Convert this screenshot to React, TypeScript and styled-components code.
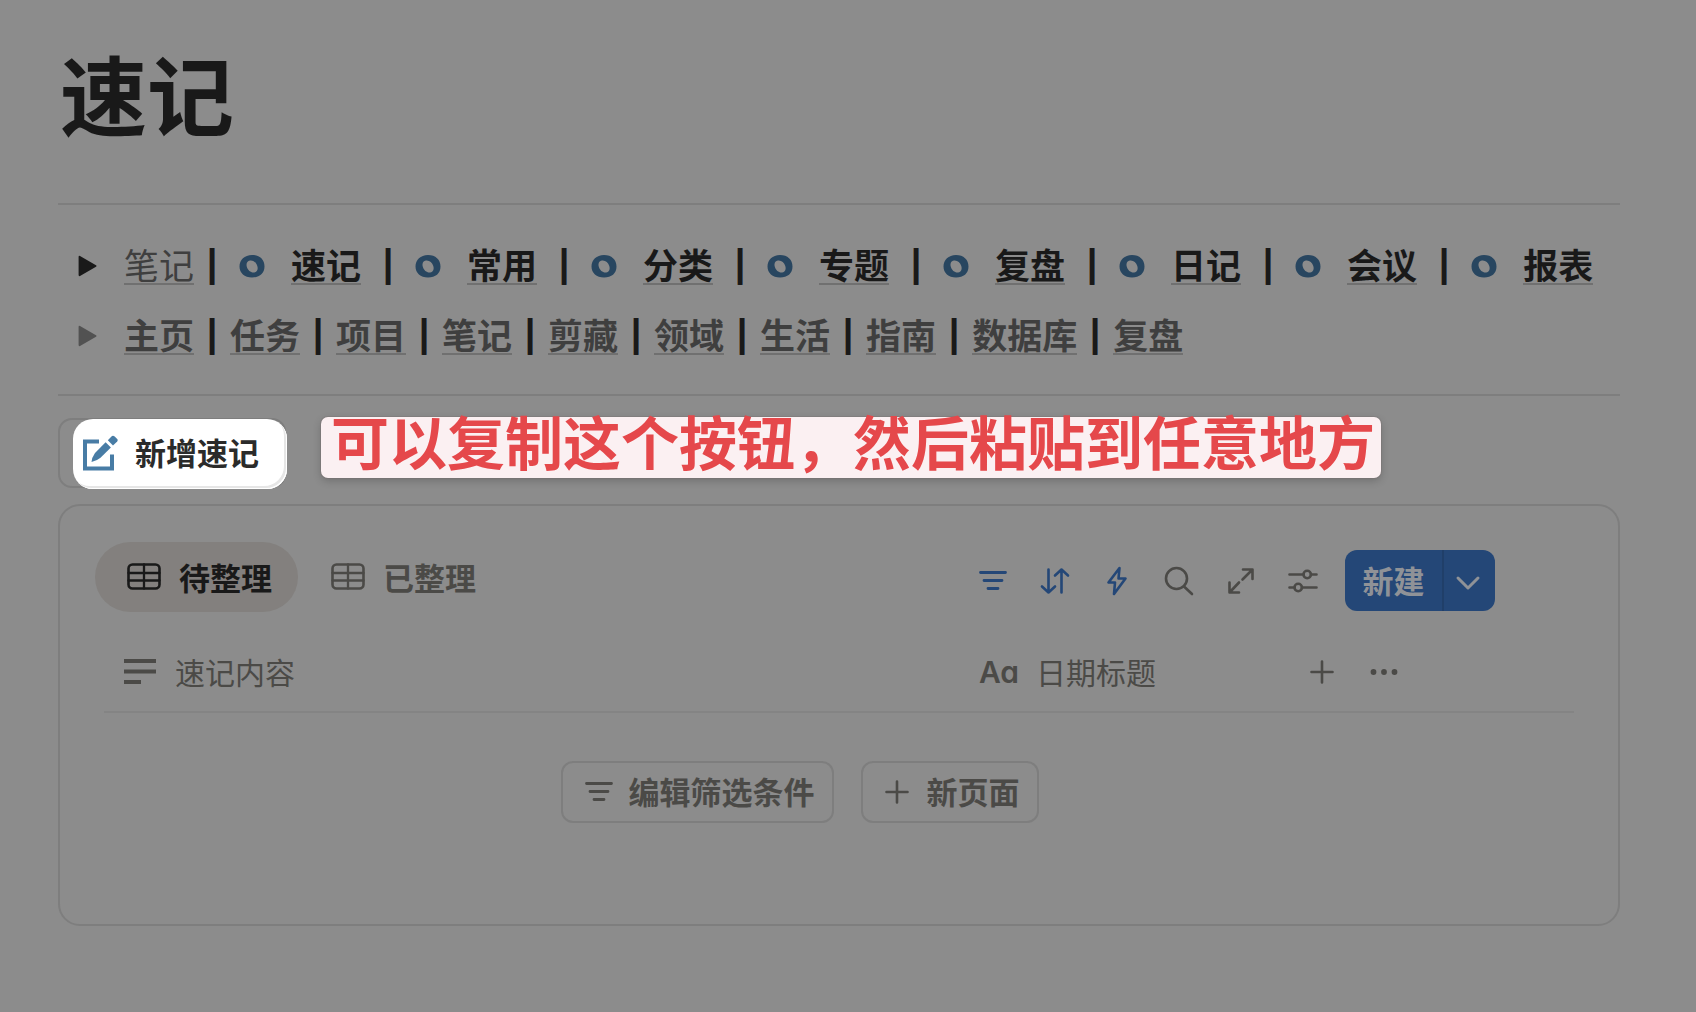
import React from 'react';
import styled, { createGlobalStyle } from 'styled-components';

const c = {
  page: '#8c8c8c',
  ink: '#191919',
  link: '#3f3f3f',
  muted: '#4b4a47',
  line: '#7e7e7e',
  faint: '#848484',
  pill: '#83807e',
  blue: '#244777',
  ring: '#284660',
};

const GlobalStyle = createGlobalStyle`
  * { box-sizing: border-box; }
  body {
    margin: 0;
    background: ${c.page};
    color: ${c.ink};
    font-family: "Noto Sans CJK SC", "Noto Sans", sans-serif;
  }
  button { font-family: inherit; cursor: pointer; }
  svg { display: block; flex: none; }
`;

const Page = styled.main`
  min-height: 100vh;
  padding: 40px 76px 84px 58px;
`;

const Title = styled.h1`
  margin: 0 0 59px;
  padding-left: 2px;
  font-size: 87px;
  line-height: 104px;
  font-weight: 700;
`;

const Rule = styled.hr`
  margin: 0;
  border: 0;
  height: 2px;
  background: ${c.line};
`;

const Navs = styled.div`
  padding: 26px 0 23px 20px;
`;

const NavRow = styled.nav`
  display: flex;
  align-items: center;
  height: 70px;
  white-space: nowrap;
`;

const Toggle = styled.button<{ $color: string }>`
  display: flex;
  width: 46px;
  padding: 0;
  border: 0;
  background: none;
  color: ${(p) => p.$color};
`;

const NavLink = styled.a<{ $color: string; $weight: number }>`
  padding-bottom: 2px;
  border-bottom: 2px solid #707070;
  color: ${(p) => p.$color};
  font-size: 35px;
  line-height: 34px;
  font-weight: ${(p) => p.$weight};
  text-decoration: none;
`;

const Bar = styled.span<{ $before: number; $after: number }>`
  display: flex;
  justify-content: center;
  width: 4px;
  margin: 0 ${(p) => p.$after}px 0 ${(p) => p.$before}px;
  padding-bottom: 6px;
  font-family: "Liberation Sans", sans-serif;
  font-size: 38px;
  line-height: 36px;
  font-weight: 700;
`;

const RingSlot = styled.span`
  width: 52px;
`;

const Actions = styled.section`
  display: flex;
  align-items: flex-start;
  gap: 35px;
  margin: 21px 0 16px;
`;

const Label = styled.span<{ $lift?: number }>`
  padding-bottom: ${(p) => p.$lift ?? 2}px;
`;

const QuickAdd = styled.button`
  position: relative;
  display: flex;
  align-items: center;
  gap: 17px;
  height: 70px;
  margin-top: 1px;
  padding: 0 25px 0 23px;
  border: 2px solid ${c.line};
  border-radius: 14px;
  background: none;
  color: #2b2b2a;
  font-size: 31px;
  font-weight: 700;
  white-space: nowrap;

  &::before {
    content: '';
    position: absolute;
    inset: -1px -3px -3px 13px;
    border-radius: 20px;
    background: #fff;
    box-shadow: inset -1px -1px 0 #fff, inset -3px -3px 0 #e6e6e6;
  }
  > * { position: relative; }
`;

const Callout = styled.p`
  margin: 0;
  height: 61px;
  padding: 0 6px 0 10px;
  border-radius: 7px;
  background: #fbf0f2;
  box-shadow: 0 0 0 1px rgba(120, 110, 110, 0.3), 0 3px 8px rgba(0, 0, 0, 0.2);
  color: #e5484b;
  font-size: 58px;
  line-height: 46px;
  font-weight: 700;
  white-space: nowrap;
`;

const Panel = styled.section`
  min-height: 422px;
  padding: 36px 44px 36px 35px;
  border: 2px solid ${c.line};
  border-radius: 22px;
`;

const PanelHead = styled.header`
  display: flex;
  align-items: center;
  justify-content: space-between;
  padding-right: 79px;
`;

const Group = styled.div`
  display: flex;
  align-items: center;
`;

const Tabs = styled(Group)`
  gap: 1px;
`;

const Tab = styled.button<{ $active?: boolean }>`
  display: flex;
  align-items: center;
  gap: 18px;
  height: 70px;
  padding: 0 26px 0 32px;
  border: 0;
  border-radius: 35px;
  background: ${(p) => (p.$active ? c.pill : 'none')};
  color: ${(p) => (p.$active ? c.ink : c.muted)};
  font-size: 31px;
  font-weight: 700;
`;

const ToolButton = styled.button<{ $blue?: boolean }>`
  display: flex;
  align-items: center;
  justify-content: center;
  width: 62px;
  height: 62px;
  padding: 0;
  border: 0;
  background: none;
  color: ${(p) => (p.$blue ? c.blue : c.muted)};
`;

const Split = styled.div`
  display: flex;
  height: 61px;
  margin: 7px 0 0 11px;
  border-radius: 12px;
  overflow: hidden;
  background: ${c.blue};
`;

const SplitPart = styled.button<{ $width: number; $divided?: boolean }>`
  display: flex;
  align-items: center;
  justify-content: center;
  width: ${(p) => p.$width}px;
  padding: ${(p) => (p.$divided ? '4px 3px 0 0' : '0')};
  border: 0;
  border-left: ${(p) => (p.$divided ? '2px solid #203f69' : '0')};
  background: none;
  color: #8f9297;
  font-size: 31px;
  font-weight: 700;
`;

const Tools = styled(Group)`
  > ${ToolButton} { margin-top: 8px; }
`;

const TableWrap = styled.div`
  padding-left: 9px;
`;

const Table = styled.table`
  width: 100%;
  margin-top: 16px;
  border-collapse: collapse;
  table-layout: fixed;
`;

const HeadRow = styled.tr`
  height: 84px;
`;

const HeadCell = styled.th<{ $width?: number }>`
  width: ${(p) => (p.$width ? `${p.$width}px` : 'auto')};
  padding: 4px 0 0;
  border-bottom: 2px solid ${c.faint};
  color: ${c.muted};
  font-size: 30px;
  font-weight: 400;
  text-align: left;
`;

const CellLabel = styled.span<{ $gap: number; $indent?: number }>`
  display: flex;
  align-items: center;
  gap: ${(p) => p.$gap}px;
  padding-left: ${(p) => p.$indent ?? 0}px;
`;

const TypeMark = styled.span`
  font-family: Inter, sans-serif;
  font-size: 30px;
  line-height: 36px;
  font-weight: 600;
  font-feature-settings: 'cv11';
`;

const IconButton = styled.button`
  display: flex;
  align-items: center;
  justify-content: center;
  width: 62px;
  height: 44px;
  padding: 0;
  border: 0;
  background: none;
  color: ${c.muted};
`;

const Empty = styled.div`
  display: flex;
  justify-content: center;
  gap: 27px;
  padding: 48px 79px 0 9px;
`;

const Outline = styled.button<{ $gap: number }>`
  display: flex;
  align-items: center;
  gap: ${(p) => p.$gap}px;
  height: 62px;
  padding: 0 17px 0 22px;
  border: 2px solid ${c.line};
  border-radius: 12px;
  background: none;
  color: ${c.muted};
  font-size: 31px;
  font-weight: 700;
  white-space: nowrap;
`;

const stroke = {
  fill: 'none',
  stroke: 'currentColor',
  strokeWidth: 2.6,
  strokeLinecap: 'round' as const,
  strokeLinejoin: 'round' as const,
};

const Triangle = () => (
  <svg width="20" height="22" viewBox="0 0 20 22" aria-hidden="true">
    <path d="M2 1 L18 10.2 Q19.4 11 18 11.8 L2 21 Q0.6 21.6 0.6 20 V2 Q0.6 0.4 2 1Z" fill="currentColor" />
  </svg>
);

const Ring = () => (
  <svg width="26" height="24" viewBox="0 0 26 24" aria-hidden="true">
    <path
      fill={c.ring}
      fillRule="evenodd"
      d="M13 1C20.500 1 25.500 5.500 25.500 12.500S20.500 23.500 13 23.500 .5 19 .5 12.500 5.500 1 13 1ZM11 6.500C8 7 7 9.500 7.800 12.800 8.800 16.500 12 18.900 15.200 18.500 18.300 18 19.300 15.200 18.300 12 17.200 8.300 14.200 6 11 6.500Z"
    />
  </svg>
);

const Compose = () => (
  <svg width="35" height="36" viewBox="0 0 35 36" aria-hidden="true" fill="#487ca5">
    <path d="M0 4.500H16V8.500H4V31.500H27V19.500H31V35.500H0Z" />
    <path d="M22.600 7.200 27.900 12.500 17.500 22.700Q13.500 26 8.500 27Q8.800 22.500 12 18Z" />
    <path d="M24.800 5.200 29 1Q30.200 .2 31.400 1.200L34.200 4Q35.200 5.200 34.200 6.400L30 10.500Z" />
  </svg>
);

const Grid = () => (
  <svg width="34" height="28" viewBox="0 0 34 28" aria-hidden="true" {...stroke}>
    <rect x="1.500" y="1.500" width="31" height="24" rx="4" />
    <path d="M1.500 10H32.500M1.500 17.500H32.500M17 1.500V25.500" strokeWidth="2.300" />
  </svg>
);

const Filter = () => (
  <svg width="28" height="22" viewBox="0 0 28 22" aria-hidden="true" {...stroke} strokeWidth={2.8}>
    <path d="M1.500 2.500H26.500M5 10.500H23M9 18.500H19" />
  </svg>
);

const Sort = () => (
  <svg width="30" height="28" viewBox="0 0 30 28" aria-hidden="true" {...stroke}>
    <path d="M8.500 2.500V25.500M2 19.500 8.500 25.500 15 19.500M21.500 25.500V2.500M15 8.500 21.500 2.500 28 8.500" />
  </svg>
);

const Bolt = () => (
  <svg width="22" height="30" viewBox="0 0 22 30" aria-hidden="true" {...stroke}>
    <path d="M13.500 2 2.500 16.500H9L8 28 19.500 12.500H12.500Z" />
  </svg>
);

const Search = () => (
  <svg width="30" height="30" viewBox="0 0 30 30" aria-hidden="true" {...stroke}>
    <circle cx="12.500" cy="12.500" r="10.500" />
    <path d="M20 20.500 28 28" />
  </svg>
);

const Expand = () => (
  <svg width="28" height="28" viewBox="0 0 28 28" aria-hidden="true" {...stroke}>
    <path d="M16 2.500H25.500V12M25 3 15.500 12.500M2.500 15.500V25.500H12M3 25 12 15.500" />
  </svg>
);

const Sliders = () => (
  <svg width="30" height="26" viewBox="0 0 30 26" aria-hidden="true" {...stroke}>
    <path d="M1.500 6.500H15.500M23 6.500H28.500M1.500 19.500H6.500M14 19.500H28.500" />
    <circle cx="19.200" cy="6.500" r="3.700" />
    <circle cx="10.200" cy="19.500" r="3.700" />
  </svg>
);

const Chevron = () => (
  <svg width="26" height="18" viewBox="0 0 26 18" aria-hidden="true" {...stroke} strokeWidth={3}>
    <path d="M3 4 13 14 23 4" />
  </svg>
);

const Lines = () => (
  <svg width="32" height="26" viewBox="0 0 32 26" aria-hidden="true" fill="currentColor">
    <path d="M0 0H32V4H0ZM0 10.500H32V14.500H0ZM0 21H17V25H0Z" />
  </svg>
);

const Plus = () => (
  <svg width="24" height="24" viewBox="0 0 24 24" aria-hidden="true" {...stroke}>
    <path d="M12 1.500V22.500M1.500 12H22.500" />
  </svg>
);

const Dots = () => (
  <svg width="28" height="8" viewBox="0 0 28 8" aria-hidden="true" fill="currentColor">
    <circle cx="3.500" cy="4" r="2.900" />
    <circle cx="14" cy="4" r="2.900" />
    <circle cx="24.500" cy="4" r="2.900" />
  </svg>
);

const views = ['速记', '常用', '分类', '专题', '复盘', '日记', '会议', '报表'];
const pages = ['主页', '任务', '项目', '笔记', '剪藏', '领域', '生活', '指南', '数据库', '复盘'];

export default function App() {
  return (
    <>
      <GlobalStyle />
      <Page>
        <Title>速记</Title>
        <Rule />
        <Navs>
          <NavRow aria-label="笔记">
            <Toggle $color={c.ink} aria-label="展开笔记"><Triangle /></Toggle>
            <NavLink href="#notes" $color={c.link} $weight={400}>笔记</NavLink>
            {views.map((name, i) => (
              <React.Fragment key={name}>
                <Bar $before={i === 0 ? 16 : 25} $after={25}>|</Bar>
                <RingSlot><Ring /></RingSlot>
                <NavLink href={`#${name}`} $color={c.ink} $weight={700}>{name}</NavLink>
              </React.Fragment>
            ))}
          </NavRow>
          <NavRow aria-label="主页">
            <Toggle $color="#525252" aria-label="展开主页"><Triangle /></Toggle>
            {pages.map((name, i) => (
              <React.Fragment key={name}>
                {i > 0 && <Bar $before={16} $after={16}>|</Bar>}
                <NavLink href={`#${name}`} $color={c.link} $weight={700}>{name}</NavLink>
              </React.Fragment>
            ))}
          </NavRow>
        </Navs>
        <Rule />
        <Actions>
          <QuickAdd><Compose /><Label $lift={4}>新增速记</Label></QuickAdd>
          <Callout>可以复制这个按钮，然后粘贴到任意地方</Callout>
        </Actions>
        <Panel>
          <PanelHead>
            <Tabs>
              <Tab $active><Grid /><Label>待整理</Label></Tab>
              <Tab><Grid /><Label>已整理</Label></Tab>
            </Tabs>
            <Tools>
              <ToolButton $blue aria-label="筛选"><Filter /></ToolButton>
              <ToolButton $blue aria-label="排序"><Sort /></ToolButton>
              <ToolButton $blue aria-label="自动化"><Bolt /></ToolButton>
              <ToolButton aria-label="搜索"><Search /></ToolButton>
              <ToolButton aria-label="展开"><Expand /></ToolButton>
              <ToolButton aria-label="设置"><Sliders /></ToolButton>
              <Split>
                <SplitPart $width={97}><Label>新建</Label></SplitPart>
                <SplitPart $width={53} $divided aria-label="更多新建选项"><Chevron /></SplitPart>
              </Split>
            </Tools>
          </PanelHead>
          <TableWrap>
            <Table>
              <thead>
                <HeadRow>
                  <HeadCell><CellLabel $gap={19} $indent={20}><Lines /><Label>速记内容</Label></CellLabel></HeadCell>
                  <HeadCell $width={312}><CellLabel $gap={17}><TypeMark>Aa</TypeMark><Label>日期标题</Label></CellLabel></HeadCell>
                  <HeadCell $width={283}>
                    <Group>
                      <IconButton aria-label="添加属性"><Plus /></IconButton>
                      <IconButton aria-label="更多"><Dots /></IconButton>
                    </Group>
                  </HeadCell>
                </HeadRow>
              </thead>
            </Table>
          </TableWrap>
          <Empty>
            <Outline $gap={16}><Filter /><Label $lift={4}>编辑筛选条件</Label></Outline>
            <Outline $gap={18}><Plus /><Label $lift={4}>新页面</Label></Outline>
          </Empty>
        </Panel>
      </Page>
    </>
  );
}
